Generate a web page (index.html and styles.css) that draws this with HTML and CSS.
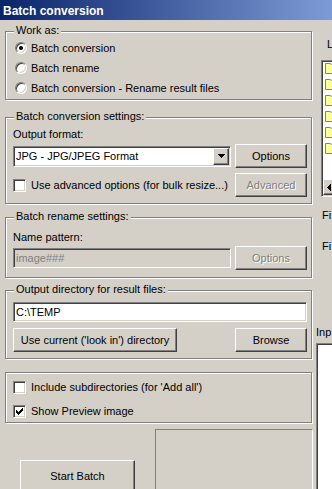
FILE: index.html
```html
<!DOCTYPE html>
<html>
<head>
<meta charset="utf-8">
<title>Batch conversion</title>
<link rel="stylesheet" href="styles.css">
</head>
<body>
<div class="window">
  <div class="titlebar">Batch conversion</div>
  <div class="main">
    <div class="left">
      <div class="group g1">
        <div class="legend">Work as:</div>
        <div class="opt-row"><span class="radio checked"></span><span>Batch conversion</span></div>
        <div class="opt-row"><span class="radio"></span><span>Batch rename</span></div>
        <div class="opt-row"><span class="radio"></span><span>Batch conversion - Rename result files</span></div>
      </div>

      <div class="group g2">
        <div class="legend">Batch conversion settings:</div>
        <div class="label">Output format:</div>
        <div class="row row-a">
          <div class="combo sunken">
            <span class="combo-text">JPG - JPG/JPEG Format</span>
            <span class="combo-btn raised"><svg width="7" height="4" viewBox="0 0 7 4"><path d="M0 0h7v1h-1v1h-1v1h-1v1h-1v-1h-1v-1h-1v-1h-1z" fill="#000"/></svg></span>
          </div>
          <div class="btn raised">Options</div>
        </div>
        <div class="row row-b">
          <div class="opt-row"><span class="check sunken"></span><span>Use advanced options (for bulk resize...)</span></div>
          <div class="btn raised disabled">Advanced</div>
        </div>
      </div>

      <div class="group g3">
        <div class="legend">Batch rename settings:</div>
        <div class="label">Name pattern:</div>
        <div class="row row-c">
          <div class="field sunken field-disabled">image###</div>
          <div class="btn raised disabled">Options</div>
        </div>
      </div>

      <div class="group g4">
        <div class="legend">Output directory for result files:</div>
        <div class="field sunken field-wide">C:\TEMP</div>
        <div class="row row-d">
          <div class="btn raised btn-current">Use current ('look in') directory</div>
          <div class="btn raised">Browse</div>
        </div>
      </div>

      <div class="group g5">
        <div class="opt-row"><span class="check sunken"></span><span>Include subdirectories (for 'Add all')</span></div>
        <div class="opt-row row-gap"><span class="check sunken"><svg width="7" height="7" viewBox="0 0 7 7"><path d="M0 2h1v3h-1zM1 3h1v3h-1zM2 4h1v3h-1zM3 3h1v3h-1zM4 2h1v3h-1zM5 1h1v3h-1zM6 0h1v3h-1z" fill="#000"/></svg></span><span>Show Preview image</span></div>
      </div>

      <div class="bottom">
        <div class="start-area">
          <div class="btn raised start">Start Batch</div>
        </div>
        <div class="panel"></div>
      </div>
    </div>

    <div class="right">
      <div class="r-look">L</div>
      <div class="listbox sunken">
        <div class="items">
          <div class="item"><svg width="14" height="12" viewBox="0 0 14 12"><path d="M0.5 1.5h5l1 1.5h6.5v8.5h-12.5z" fill="#ffff99" stroke="#808080"/><path d="M1.5 3.5h11" stroke="#fff"/></svg></div>
          <div class="item"><svg width="14" height="12" viewBox="0 0 14 12"><path d="M0.5 1.5h5l1 1.5h6.5v8.5h-12.5z" fill="#ffff99" stroke="#808080"/><path d="M1.5 3.5h11" stroke="#fff"/></svg></div>
          <div class="item"><svg width="14" height="12" viewBox="0 0 14 12"><path d="M0.5 1.5h5l1 1.5h6.5v8.5h-12.5z" fill="#ffff99" stroke="#808080"/><path d="M1.5 3.5h11" stroke="#fff"/></svg></div>
          <div class="item"><svg width="14" height="12" viewBox="0 0 14 12"><path d="M0.5 1.5h5l1 1.5h6.5v8.5h-12.5z" fill="#ffff99" stroke="#808080"/><path d="M1.5 3.5h11" stroke="#fff"/></svg></div>
          <div class="item"><svg width="14" height="12" viewBox="0 0 14 12"><path d="M0.5 1.5h5l1 1.5h6.5v8.5h-12.5z" fill="#ffff99" stroke="#808080"/><path d="M1.5 3.5h11" stroke="#fff"/></svg></div>
          <div class="item"><svg width="14" height="12" viewBox="0 0 14 12"><path d="M0.5 1.5h5l1 1.5h6.5v8.5h-12.5z" fill="#ffff99" stroke="#808080"/><path d="M1.5 3.5h11" stroke="#fff"/></svg></div>
        </div>
        <div class="hscroll">
          <span class="sb-btn raised"><svg width="4" height="7" viewBox="0 0 4 7"><path d="M0 3h1v-1h1v-1h1v-1h1v7h-1v-1h-1v-1h-1v-1h-1z" fill="#000"/></svg></span>
        </div>
      </div>
      <div class="r-fi1">Fi</div>
      <div class="r-fi2">Fi</div>
      <div class="r-inp">Inp</div>
      <div class="inpbox sunken"></div>
    </div>
  </div>
</div>
</body>
</html>
```

FILE: styles.css
```css
html, body {
  margin: 0;
  padding: 0;
  width: 332px;
  height: 489px;
  overflow: hidden;
  background: #d4d0c8;
}

body {
  font-family: "Liberation Sans", Arial, sans-serif;
  font-size: 11px;
  line-height: 13px;
  color: #000;
}

.window {
  width: 332px;
  height: 489px;
  display: flex;
  flex-direction: column;
}

.titlebar {
  height: 20px;
  flex: none;
  box-sizing: border-box;
  padding: 3px 0 0 3px;
  line-height: 17px;
  font-size: 12px;
  font-weight: bold;
  color: #fff;
  white-space: nowrap;
  background: linear-gradient(to right, #0a246a, #7d9bd6);
}

.main {
  flex: 1;
  display: flex;
  min-height: 0;
}

.left {
  width: 316px;
  flex: none;
  display: flex;
  flex-direction: column;
}

/* etched group frame */
.group {
  position: relative;
  box-sizing: border-box;
  width: 307px;
  margin-left: 5px;
  flex: none;
  border: 1px solid #808080;
  box-shadow: inset 1px 1px #fff, 1px 1px #fff;
  padding: 0 4px 0 7px;
}

.legend {
  position: absolute;
  top: -8px;
  left: 8px;
  padding: 0 2px;
  background: #d4d0c8;
  white-space: nowrap;
}

.g1 { margin-top: 11px; height: 69px; padding-top: 6px; }
.g2 { margin-top: 17px; height: 87px; padding-top: 10px; }
.g3 { margin-top: 13px; height: 61px; padding-top: 13px; }
.g4 { margin-top: 12px; height: 69px; padding-top: 11px; }
.g5 { margin-top: 13px; height: 51px; padding-top: 4px; }

.label {
  height: 13px;
  white-space: nowrap;
}

.row {
  display: flex;
  align-items: center;
  justify-content: space-between;
  height: 24px;
}
.row-a { margin-top: 3px; }
.row-b { margin-top: 5px; }
.row-c { margin-top: 2px; }
.row-d { margin-top: 6px; }

.opt-row {
  display: flex;
  align-items: center;
  height: 20px;
  white-space: nowrap;
}
.row-gap { margin-top: 4px; }

/* 3D edges */
.sunken {
  border: 1px solid;
  border-color: #808080 #fff #fff #808080;
  box-shadow: inset 1px 1px #404040, inset -1px -1px #d4d0c8;
}

.raised {
  border: 1px solid;
  border-color: #fff #404040 #404040 #fff;
  box-shadow: inset -1px -1px #808080;
}

.radio {
  position: relative;
  flex: none;
  width: 12px;
  height: 12px;
  box-sizing: border-box;
  border-radius: 50%;
  border: 1px solid;
  border-color: #808080 #fff #fff #808080;
  box-shadow: inset 1px 1px #404040, inset -1px -1px #d4d0c8;
  background: #fff;
  margin: 0 4px 0 2px;
}
.radio.checked::after {
  content: "";
  position: absolute;
  left: 3px;
  top: 3px;
  width: 4px;
  height: 4px;
  border-radius: 50%;
  background: #000;
}

.check {
  flex: none;
  width: 13px;
  height: 13px;
  box-sizing: border-box;
  background: #fff;
  margin-right: 5px;
  display: flex;
  align-items: center;
  justify-content: center;
}

.combo {
  width: 218px;
  height: 21px;
  box-sizing: border-box;
  display: flex;
  align-items: center;
  background: #fff;
  white-space: nowrap;
}
.combo-text {
  flex: 1;
  padding-left: 2px;
}
.combo-btn {
  flex: none;
  width: 16px;
  height: 17px;
  box-sizing: border-box;
  margin-right: 1px;
  display: flex;
  align-items: center;
  justify-content: center;
  background: #d4d0c8;
}

.btn {
  flex: none;
  box-sizing: border-box;
  width: 72px;
  height: 24px;
  display: flex;
  align-items: center;
  justify-content: center;
  background: #d4d0c8;
  white-space: nowrap;
}
.btn-current { width: 164px; }
.disabled {
  color: #808080;
  text-shadow: 1px 1px #fff;
}

.field {
  flex: none;
  width: 218px;
  height: 20px;
  box-sizing: border-box;
  display: flex;
  align-items: center;
  padding-left: 2px;
  background: #fff;
  white-space: nowrap;
}
.field-disabled {
  background: #d4d0c8;
  color: #808080;
}
.field-wide { width: 294px; }

.bottom {
  flex: 1;
  display: flex;
  margin-top: 6px;
  min-height: 0;
}
.start-area {
  width: 155px;
  flex: none;
}
.start {
  width: 115px;
  height: 32px;
  margin: 31px 0 0 20px;
}
.panel {
  width: 158px;
  flex: none;
  box-sizing: border-box;
  border-top: 1px solid #808080;
  border-left: 1px solid #808080;
  border-right: 1px solid #fff;
}

/* right side (mostly cut off) */
.right {
  flex: 1;
  min-width: 0;
  overflow: hidden;
  display: flex;
  flex-direction: column;
  white-space: nowrap;
}
.r-look { margin: 18px 0 0 11px; }
.listbox {
  flex: none;
  width: 200px;
  height: 137px;
  box-sizing: border-box;
  margin: 9px 0 0 5px;
  background: #fff;
  display: flex;
  flex-direction: column;
}
.items { margin-top: 1px; }
.item {
  height: 16px;
  padding-left: 3px;
  display: flex;
  align-items: flex-start;
}
.hscroll {
  margin: auto 1px 1px 1px;
  height: 16px;
  background: #ece9e4;
  display: flex;
}
.sb-btn {
  width: 16px;
  height: 16px;
  box-sizing: border-box;
  background: #d4d0c8;
  display: flex;
  align-items: center;
  padding-left: 3px;
}
.r-fi1 { margin: 12px 0 0 6px; }
.r-fi2 { margin: 18px 0 0 6px; }
.r-inp { margin: 73px 0 0 0; }
.inpbox {
  flex: none;
  width: 200px;
  height: 200px;
  box-sizing: border-box;
  margin-top: 4px;
  background: #fff;
}
```
